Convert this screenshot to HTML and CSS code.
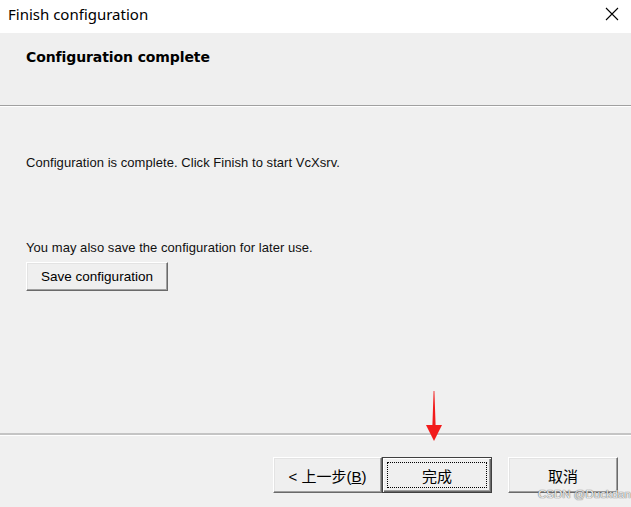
FILE: index.html
```html
<!DOCTYPE html>
<html>
<head>
<meta charset="utf-8">
<link rel="stylesheet" href="styles.css">
</head>
<body>
<div class="window">
  <div class="titlebar">
    <span class="title">Finish configuration</span>
    <span class="close" aria-label="Close">
      <svg width="14" height="14" viewBox="0 0 14 14"><path d="M1 1 L13 13 M13 1 L1 13" stroke="#000" stroke-width="1.1" fill="none"/></svg>
    </span>
  </div>
  <div class="header">
    <div class="heading">Configuration complete</div>
  </div>
  <div class="rule"></div>
  <div class="content">
    <p class="line first">Configuration is complete. Click Finish to start VcXsrv.</p>
    <p class="line second">You may also save the configuration for later use.</p>
    <button class="btn save">Save configuration</button>
  </div>
  <div class="rule bottom-rule"></div>
  <div class="footer">
    <div class="nav-pair">
      <button class="btn nav back">&lt; 上一步(<u>B</u>)</button>
      <button class="btn nav default"><span class="focus">完成</span></button>
    </div>
    <button class="btn nav cancel">取消</button>
  </div>
  <div class="arrow">
    <svg width="20" height="52" viewBox="0 0 20 52"><path d="M9.6 0 L10.4 0 L11.6 34 L18 34 L10 50 L2 34 L8.4 34 Z" fill="#f21b1b"/></svg>
  </div>
  <div class="watermark">CSDN @Duckdan</div>
</div>
</body>
</html>
```
FILE: styles.css
```css
* { box-sizing: border-box; }
html, body { margin: 0; padding: 0; }
body {
  width: 631px;
  height: 507px;
  overflow: hidden;
  background: #f0f0f0;
  font-family: "Liberation Sans", "Noto Sans CJK SC", sans-serif;
  color: #000;
}
.window {
  position: relative;
  width: 631px;
  height: 507px;
  display: flex;
  flex-direction: column;
}
.titlebar {
  height: 33px;
  background: #fff;
  display: flex;
  align-items: center;
  justify-content: space-between;
  padding-left: 8px;
  padding-right: 12px;
}
.title {
  font-family: "Noto Sans", sans-serif;
  font-size: 15px;
  color: #000;
  margin-top: -5px;
}
.close { display: flex; margin-top: -5px; }
.header {
  height: 72px;
  background: #efefef;
  padding: 15px 0 0 26px;
}
.heading {
  font-family: "DejaVu Sans", sans-serif;
  font-weight: bold;
  font-size: 14px;
  line-height: 18px;
  letter-spacing: -0.1px;
  color: #000;
}
.rule {
  height: 2px;
  border-top: 1px solid #a0a0a0;
  border-bottom: 1px solid #ffffff;
}
.content {
  height: 326px;
  padding: 48px 0 0 26px;
  display: flex;
  flex-direction: column;
  align-items: flex-start;
}
.line {
  margin: 0;
  font-size: 13px;
  line-height: 15px;
  letter-spacing: 0.05px;
  color: #111;
}
.line.second { margin-top: 70px; }
.btn {
  font-family: "Liberation Sans", "Noto Sans CJK SC", sans-serif;
  font-size: 13px;
  color: #000;
  background: #efefef;
  border: 1px solid;
  border-color: #ffffff #6a6a6a #6a6a6a #ffffff;
  box-shadow: inset -1px -1px 0 #a0a0a0, inset 1px 1px 0 #e3e3e3;
  padding: 0;
  cursor: default;
}
.save {
  margin-top: 7px;
  width: 142px;
  height: 29px;
  font-size: 13.5px;
}
.bottom-rule { border-top-width: 2px; border-top-color: #c4c4c4; height: 3px; }
.footer {
  flex: 1;
  display: flex;
  align-items: flex-start;
  padding: 21px 0 0 273px;
  gap: 16px;
}
.nav-pair { display: flex; }
.nav {
  height: 36px;
  width: 110px;
  font-size: 15px;
}
.back { width: 109px; }
.default {
  border: 1px solid #404040;
  box-shadow: inset 1px 1px 0 #fff, inset -1px -1px 0 #6a6a6a, inset -2px -2px 0 #a0a0a0;
  padding: 4px;
}
.focus {
  display: flex;
  align-items: center;
  justify-content: center;
  width: 100%;
  height: 100%;
  border: 1px dotted #000;
}
.arrow {
  position: absolute;
  left: 424px;
  top: 391px;
  line-height: 0;
}
.watermark {
  position: absolute;
  left: 538px;
  top: 488px;
  white-space: nowrap;
  font-family: "Liberation Sans", sans-serif;
  font-size: 11.5px;
  line-height: 13px;
  color: rgba(255,255,255,0.9);
  text-shadow: 0 0 1px #666, 0 0 1px #666;
}
```
